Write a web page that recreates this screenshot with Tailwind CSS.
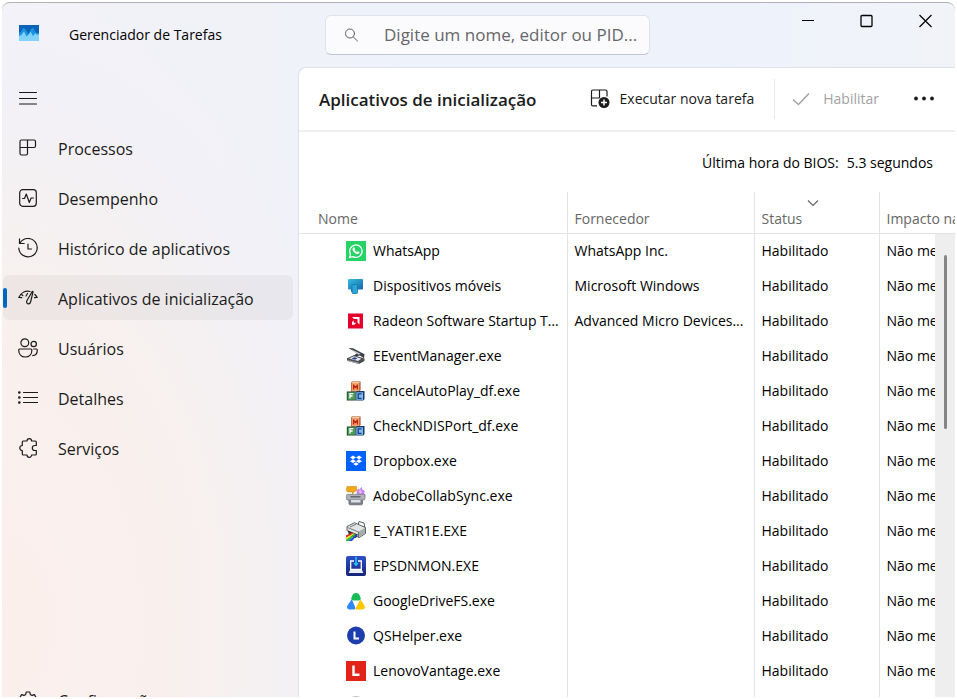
<!DOCTYPE html>
<html lang="pt-BR">
<head>
  <meta charset="UTF-8" />
  <meta name="viewport" content="width=device-width, initial-scale=1.0"/>
  <title>Gerenciador de Tarefas</title>
  <script src="https://cdn.jsdelivr.net/npm/@tailwindcss/browser@4"></script>
</head>
<body class="bg-white p-0.5 h-screen overflow-hidden font-['Open_Sans','Noto_Sans',sans-serif] text-[#1b1b1b]">

  <!-- Ícones dos aplicativos -->
  <svg class="size-0" aria-hidden="true">
    <defs>
      <linearGradient id="gTela" x1="0" y1="0" x2="1" y2="1"><stop offset="0" stop-color="#35bfdc"/><stop offset="1" stop-color="#1565b0"/></linearGradient>
      <linearGradient id="gEpson" x1="0" y1="0" x2="0" y2="1"><stop offset="0" stop-color="#2b50c8"/><stop offset="1" stop-color="#16237c"/></linearGradient>
    </defs>
    <symbol id="whatsapp" viewBox="0 0 20 20">
      <path fill="#25d366" d="M0 0h20v20H0z"/>
      <path fill="none" stroke="#fff" stroke-width="1.3" d="M3.6 16.4l.9-3.2a6.2 6.2 0 1 1 2.4 2.4z"/>
      <path fill="#fff" d="M7.4 6.6c.6-.5 1-.3 1.2.2l.5 1.1c.1.4-.5.8-.5 1.1.5 1 1.3 1.7 2.3 2.1.4 0 .8-.9 1.2-.7l1.3.7c.3.2.1 1-.4 1.4-.8.7-2 .6-3.4-.1-1.5-.8-2.9-2.4-3.1-3.7-.1-.9.3-1.6.9-2.1z"/>
    </symbol>
    <symbol id="dispositivos" viewBox="0 0 20 20">
      <rect x="2" y="3" width="15" height="10.5" rx="1" fill="url(#gTela)"/>
      <path fill="#0e4d86" d="M5 13.5h3v2H5z"/>
      <rect x="6" y="8.5" width="5.5" height="9" rx=".8" fill="#2aa6d6" stroke="#1873ae" stroke-width=".8"/>
    </symbol>
    <symbol id="radeon" viewBox="0 0 20 20">
      <path fill="#e4002b" d="M2 2.500h15v15H2z"/>
      <path fill="#fff" d="M6 6h7.500v7.500l-2-2V8H8zM7.700 9.300v2.500h2.500L8.300 13.700H6v-2.600z"/>
    </symbol>
    <symbol id="eevent" viewBox="0 0 20 20">
      <path fill="#3b3f46" d="M2.500 2l4.500.3 11.500 6-.5 4-4-2.800L9 10.500l-2-.5 4-2.700z"/>
      <path fill="#c3c8cf" d="M5.500 3.200l9 4.600-1.700.9-5-3.300z"/>
      <path fill="#4a4e55" d="M1 12.300l7-3 10.500 3.200v2.500L13 18 1 14.700z"/>
      <path fill="#e6e9ee" d="M3 12.500l5-2.300 7.300 2.600-3.300 2.300z"/>
      <path fill="#27408f" d="M5.500 12.500l3-1.300 2.800 1-2.300 1.500z"/>
      <path fill="#a5aab2" d="M1.500 14L13 16.800V18L1.500 15z"/>
    </symbol>
    <symbol id="mfc" viewBox="0 0 20 20">
      <path fill="#8f3d14" d="M5 2l1-1.500h8.500V9L13.500 10.500H5z"/>
      <path fill="#f4a26c" d="M5.500 2h8v8h-8z"/>
      <path fill="#f9c69f" d="M5.500 2L6.500.8h7.500L13.500 2z"/>
      <path fill="#153c19" d="M.8 10.500h8.900v9H.8z"/>
      <path fill="#4d9b59" d="M1.600 11.300h7.400v7.500H1.600z"/>
      <path fill="#12386c" d="M9.900 11l.8-.9h7.800v8l-1.200 1.400H9.900z"/>
      <path fill="#83b8ec" d="M10.300 11.300H17v7.500h-6.700z"/>
      <path fill="none" stroke="#bd1f14" stroke-width="1.300" d="M7.600 8.500v-5M11.400 8.500v-5M7.600 4.500l1.900 2 1.900-2"/>
      <path fill="none" stroke="#fff" stroke-width="1.300" d="M4 17.600v-5h3.300M4 15h2.600"/>
      <path fill="none" stroke="#143f8f" stroke-width="1.300" d="M15.500 12.800h-3.300v4.500h3.300"/>
    </symbol>
    <symbol id="dropbox" viewBox="0 0 20 20">
      <path fill="#0061fe" d="M0 0h20v20H0z"/>
      <path fill="#fff" d="M7 4.500l3 1.900-3 1.900-3-1.900zM13 4.500l3 1.900-3 1.900-3-1.900zM7 8.300l3 1.900-3 1.900-3-1.900zM13 8.300l3 1.900-3 1.900-3-1.900zM10 11.200l2.800 1.800-2.800 1.800L7.200 13z"/>
    </symbol>
    <symbol id="adobe" viewBox="0 0 20 20">
      <path fill="#c783e8" d="M10.500 6L12 2.500l1.700 1L15.500.8l1 3L19 5l-1 2 2 2.500h-9z"/>
      <path fill="#e6bdf5" d="M12.500 5l2.200-1.300L16 6.500l-2 1.600z"/>
      <path fill="#efaa16" stroke="#bd7e10" stroke-width=".5" d="M1 .5h9.500v4.300L7.800 5.900 6.500 8V6H1.500L.3 4.500z"/>
      <rect x=".5" y="8.300" width="18.500" height="5.700" rx="1.300" fill="#aeb1b7" stroke="#74777d" stroke-width=".7"/>
      <path fill="#65686e" d="M4.500 10h10v1.500h-10z"/>
      <path fill="#7b7e84" d="M2.500 14h14.500v3.500l-1 1.800H3.500l-1-1.800z"/>
      <path fill="#dfe0e3" d="M5 14h9.500v2.500H5z"/>
    </symbol>
    <symbol id="yatir" viewBox="0 0 20 20">
      <path fill="#fff" stroke="#44484b" stroke-width=".9" d="M12 4.500l1-4 5 1.500.8 4.500z"/>
      <path fill="#e2e5e5" stroke="#3c4043" stroke-width=".8" d="M1 5.500l7.500-3.800 11 4.800v6l-6.500 4.200L1 9.500z"/>
      <path fill="#a7acad" d="M12.500 10.500l6.500-3.500v5.200l-6.500 4z"/>
      <path fill="none" stroke="#54595c" stroke-width=".8" d="M4 6l6-2.700M1.500 6.500l11 4.500v5"/>
      <path fill="#2a2d2e" d="M2 9.500l10 4-2 3.500-7-2z"/>
      <path fill="#e12a25" d="M0 14.500l6-3 1.500.7L0 17z"/>
      <path fill="#f7df28" d="M0 16.700l7.500-4.500 1.300.6L0 19z"/>
      <path fill="#2cbc45" d="M0 18.700l8.800-5.900 1.200.7L2.500 20H0z"/>
      <path fill="#2947d8" d="M2.500 20l7.500-6.500 1.200.6L6 20z"/>
    </symbol>
    <symbol id="epson" viewBox="0 0 20 20">
      <rect width="20" height="20" rx="2" fill="url(#gEpson)"/>
      <path fill="none" stroke="#fff" stroke-width="1.3" d="M8 5H4.700v8.500h10.600V5H12"/>
      <path fill="#e9edf8" d="M4 14h12l1.300 3H2.700z"/>
      <path fill="#25c3ef" d="M9.200 1h1.600v6h1.900L10 10.500 7.300 7h1.900z"/>
    </symbol>
    <symbol id="gdrive" viewBox="0 0 20 20">
      <path fill="#3086fd" d="M5.800 8.200L1.300 14.700c-.8 1.600.1 3.500 2 3.800h4.200c1.800 0 2-1.300 1.600-2.500z"/>
      <path fill="#fbc800" d="M14.200 8.200l4.500 6.500c.8 1.600-.1 3.500-2 3.800H9l2.500-4.800z"/>
      <path fill="#16bc53" d="M10 2c2 0 2.800.8 3.500 2.200l1.200 2.800c.4 1.500-.8 2.500-2.300 2.500H7.600c-1.500 0-2.700-1-2.300-2.500l1.200-2.800C7.200 2.800 8 2 10 2z"/>
      <path fill="#fff" d="M7.500 10.300h5L10 14.500z"/>
    </symbol>
    <symbol id="qshelper" viewBox="0 0 20 20">
      <circle cx="10" cy="9.500" r="9" fill="#1d3fae"/>
      <path fill="none" stroke="#fff" stroke-width="2" d="M8.500 5.500v7h4.500"/>
    </symbol>
    <symbol id="lenovo" viewBox="0 0 20 20">
      <path fill="#e2231a" d="M0 0h20v20H0z"/>
      <path fill="none" stroke="#fff" stroke-width="2.4" d="M7.500 4.500v9.300h6"/>
    </symbol>
    <symbol id="generico" viewBox="0 0 20 20">
      <circle cx="10" cy="10" r="9.5" fill="#e3e3e3" stroke="#bdbdbd"/>
    </symbol>
  </svg>

  <div class="h-full flex flex-col overflow-hidden rounded-t-lg border-t border-[#b3b3b7] bg-[radial-gradient(ellipse_370px_600px_at_0px_620px,#fbefeb_0%,#f9f0ed_45%,#f4f1f3_75%,#f2f1f7_90%,transparent_110%),linear-gradient(90deg,#f2f2f7_0%,#f0f2f8_28%,#eef2fb_42%,#eef2fb_75%,#f1f3f8_100%)]">

    <!-- Barra de título -->
    <header class="h-16 shrink-0 flex items-center">
      <div class="w-[323px] shrink-0 flex items-center pl-[17px]">
        <svg class="w-5 h-4 mb-1" viewBox="0 0 20 16">
          <path fill="#0a64b8" d="M0 0h20v16H0z"/>
          <path fill="#1c94e2" d="M0 8l2-1 2-4 2.500 1 2 4 1.500 1 2-5 2-1.500 2.500 5L20 8v8H0z"/>
          <path fill="#7fd3fb" d="M0 11l2.500-1L5 6.500l2.500 5L10 9l1.500-2.500L14 11l2.500-3 1.500 2 2-1v7H0z"/>
        </svg>
        <h1 class="ml-[30px] text-sm text-black">Gerenciador de Tarefas</h1>
      </div>
      <label class="w-[325px] h-10 flex items-center rounded-md border border-[#dfe2ea] border-b-[#c3c6ce] bg-[#fbfbfe]">
        <svg class="w-4 h-4 ml-[18px] shrink-0" viewBox="0 0 16 16" fill="none" stroke="#5d5d62" stroke-linecap="round">
          <circle cx="6" cy="6.500" r="4.500"/><path d="M9.300 10l4.200 4"/>
        </svg>
        <input type="text" aria-label="Pesquisar" placeholder="Digite um nome, editor ou PID..." class="ml-6 w-full min-w-0 bg-transparent text-[17px] placeholder:text-[#66666a] focus:outline-none">
      </label>
      <div class="ml-auto self-start flex">
        <button type="button" aria-label="Minimizar" class="w-[59px] h-9 grid place-items-center hover:bg-black/5">
          <svg class="w-3.5 h-3.5" viewBox="0 0 14 14" fill="none" stroke="#000"><path d="M1 6.500h12"/></svg>
        </button>
        <button type="button" aria-label="Maximizar" class="w-[59px] h-9 grid place-items-center hover:bg-black/5">
          <svg class="w-3.5 h-3.5" viewBox="0 0 14 14" fill="none" stroke="#000" stroke-width="1.3"><rect x="1" y="1.500" width="11" height="11" rx="1"/></svg>
        </button>
        <button type="button" aria-label="Fechar" class="w-[59px] h-9 grid place-items-center hover:bg-red-600">
          <svg class="w-3.5 h-3.5" viewBox="0 0 14 14" fill="none" stroke="#000" stroke-width="1.2"><path d="M.5 1l12 12M12.500 1L.5 13"/></svg>
        </button>
      </div>
    </header>

    <div class="flex-1 min-h-0 flex">
      <!-- Menu lateral -->
      <nav class="w-[296px] shrink-0 flex flex-col gap-[5px] pl-px pr-[5px] pt-2">
        <button type="button" aria-label="Menu" class="h-[45px] w-12 pl-[15px]">
          <svg class="w-5 h-5" viewBox="0 0 20 20" stroke="#1b1b1b" stroke-width="1.2" stroke-linecap="round"><path d="M1.500 4.500h17M1.500 10.500h17M1.500 16h17"/></svg>
        </button>
        <a href="#" class="h-[45px] flex items-center gap-5 pl-[15px] rounded-md hover:bg-black/5">
          <svg class="w-5 h-5" viewBox="0 0 20 20" fill="none" stroke="#1b1b1b" stroke-width="1.2"><path d="M3.500 2h12.500a1.500 1.500 0 0 1 1.500 1.500V8A1.500 1.500 0 0 1 16 9.500H2V3.500A1.500 1.500 0 0 1 3.500 2zM2 9.500v6A1.500 1.500 0 0 0 3.500 17H8a1.500 1.500 0 0 0 1.500-1.500V2"/></svg>
          <span class="pt-0.5">Processos</span>
        </a>
        <a href="#" class="h-[45px] flex items-center gap-5 pl-[15px] rounded-md hover:bg-black/5">
          <svg class="w-5 h-5" viewBox="0 0 20 20" fill="none" stroke="#1b1b1b" stroke-width="1.2" stroke-linejoin="round" stroke-linecap="round"><rect x="1.700" y="1.700" width="16.600" height="16.600" rx="3"/><path d="M4.500 10.500h2L8.300 6l3 8.500 1.800-4.500h2.400"/></svg>
          <span class="pt-0.5">Desempenho</span>
        </a>
        <a href="#" class="h-[45px] flex items-center gap-5 pl-[15px] rounded-md hover:bg-black/5">
          <svg class="w-5 h-5" viewBox="0 0 20 20" fill="none" stroke="#1b1b1b" stroke-width="1.2" stroke-linecap="round"><path d="M2.200 4.800A9.200 9.200 0 1 1 .8 10M1.500.8v4.700h4.700M10 6v5h3.500"/></svg>
          <span class="pt-0.5">Histórico de aplicativos</span>
        </a>
        <a href="#" aria-current="page" class="relative h-[45px] flex items-center gap-5 pl-[15px] rounded-md bg-black/4">
          <span class="absolute left-0 w-1 h-5 rounded-full bg-[#0067c0]"></span>
          <svg class="w-5 h-5" viewBox="0 0 20 20" fill="none" stroke="#1b1b1b" stroke-width="1.2" stroke-linecap="round" stroke-linejoin="round"><path d="M.8 9.500C3 4.500 7.500 2.300 12 3.500M.8 9.500l3 .2M3.200 6.200l1.600 1.300M16.800 6.500c1 .9 1.800 1.800 2.400 3l-2.700.2M14.200 3.500L9 12.500c-.8 1.600-.2 3 1 3.300 1.300.3 2.300-.6 2.700-2.300l2.300-9.500c.1-.6-.5-.9-.8-.5zM9.500 5.500L8 8"/></svg>
          <span class="pt-0.5">Aplicativos de inicialização</span>
        </a>
        <a href="#" class="h-[45px] flex items-center gap-5 pl-[15px] rounded-md hover:bg-black/5">
          <svg class="w-5 h-5" viewBox="0 0 20 20" fill="none" stroke="#1b1b1b" stroke-width="1.2"><circle cx="6.800" cy="4.800" r="3.900"/><circle cx="15.700" cy="6" r="2.700"/><path d="M1.700 11h11.200c.6 0 1 .4 1 1 0 4-2.500 7-6.600 7S.7 16 .7 12c0-.6.4-1 1-1zM15.300 11h3c.6 0 1 .4 1 1 0 3.700-2 5.600-5 5.600"/></svg>
          <span class="pt-0.5">Usuários</span>
        </a>
        <a href="#" class="h-[45px] flex items-center gap-5 pl-[15px] rounded-md hover:bg-black/5">
          <svg class="w-5 h-5" viewBox="0 0 20 20" fill="#1b1b1b"><circle cx="1.300" cy="4.500" r="1.300"/><circle cx="1.300" cy="9.500" r="1.300"/><circle cx="1.300" cy="14.500" r="1.300"/><path fill="none" stroke="#1b1b1b" stroke-width="1.2" stroke-linecap="round" d="M5.500 4.500h14M5.500 9.500h14M5.500 14.500h14"/></svg>
          <span class="pt-0.5">Detalhes</span>
        </a>
        <a href="#" class="h-[45px] flex items-center gap-5 pl-[15px] rounded-md hover:bg-black/5">
          <svg class="w-5 h-5" viewBox="0 0 20 20" fill="none" stroke="#1b1b1b" stroke-width="1.2" stroke-linejoin="round"><path d="M9 3a2.300 2.300 0 0 1 4.600 0h3.700c.6 0 1 .4 1 1v3.500h-1.500a2.500 2.500 0 0 0 0 5h1.500V16c0 .6-.4 1-1 1h-3.700a2.300 2.300 0 0 1-4.600 0H5.300c-.6 0-1-.4-1-1v-3.500a2.500 2.500 0 0 1 0-5V4c0-.6.4-1 1-1z"/></svg>
          <span class="pt-0.5">Serviços</span>
        </a>
        <a href="#" class="mt-auto -mb-[26px] shrink-0 h-[45px] flex items-center gap-5 pl-[15px] rounded-md hover:bg-black/5">
          <svg class="w-5 h-5" viewBox="0 0 20 20" fill="none" stroke="#1b1b1b" stroke-width="1.2" stroke-linejoin="round"><path d="M8.200 1h3.600l.5 2.400 1.700 1 2.400-.8 1.800 3.100-1.900 1.700v2l1.900 1.700-1.800 3.100-2.400-.8-1.700 1-.5 2.400H8.200l-.5-2.400-1.700-1-2.400.8-1.800-3.100 1.900-1.700v-2L1.800 6.700l1.800-3.100 2.400.8 1.700-1z"/><circle cx="10" cy="9.500" r="2.800"/></svg>
          <span>Configurações</span>
        </a>
      </nav>

      <!-- Conteúdo -->
      <main class="flex-1 min-w-0 flex flex-col overflow-hidden bg-white rounded-tl-lg border-t border-l border-[#dfe1e9]">
        <div class="h-16 shrink-0 flex items-center pl-5 pr-[11px] border-b-2 border-[#efefef] text-sm">
          <h2 class="pt-0.5 text-[17px] font-semibold whitespace-nowrap">Aplicativos de inicialização</h2>
          <button type="button" class="ml-auto h-10 flex items-center gap-2.5 whitespace-nowrap">
            <svg class="w-5 h-5" viewBox="0 0 20 20" fill="none" stroke="#1b1b1b" stroke-width="1.2"><path d="M7 16.900H3a1.500 1.500 0 0 1-1.500-1.500V2.500A1.500 1.500 0 0 1 3 1h12.500A1.500 1.500 0 0 1 17 2.500v5M1.500 9h8M9.500 1v8"/><circle cx="14" cy="13.500" r="5.500" fill="#1b1b1b" stroke="none"/><path stroke="#fff" stroke-width="1.5" d="M14 10.500v6M11 13.500h6"/></svg>
            Executar nova tarefa
          </button>
          <div class="ml-5 h-10 border-l border-[#ebebeb]"></div>
          <button type="button" disabled class="ml-4 h-10 flex items-center gap-3 text-[#a2a2a2]">
            <svg class="w-5 h-5" viewBox="0 0 20 20" fill="none" stroke="#a2a2a2" stroke-width="1.5"><path d="M2 10.500l5.500 5L18 4.500"/></svg>
            Habilitar
          </button>
          <button type="button" aria-label="Mais opções" class="ml-[25px] w-10 h-10 grid place-items-center">
            <svg class="w-5 h-5" viewBox="0 0 20 20" fill="#1b1b1b"><circle cx="2" cy="9.500" r="1.900"/><circle cx="10" cy="9.500" r="1.900"/><circle cx="18" cy="9.500" r="1.900"/></svg>
          </button>
        </div>

        <p class="h-[60px] shrink-0 flex items-center justify-end gap-2 pt-0.5 pr-[22px] text-sm text-black"><span>Última hora do BIOS:</span><span>5.3 segundos</span></p>

        <div class="relative flex-1 min-h-0 overflow-hidden">
          <table class="w-full table-fixed text-sm text-black text-left">
            <colgroup>
              <col class="w-[268px]"><col class="w-[187px]"><col class="w-[125px]"><col>
            </colgroup>
            <thead class="text-[#666666]">
              <tr class="h-[41px] border-b border-[#e3e3e3] align-bottom">
                <th class="font-normal pl-[19px] pb-1 border-r border-[#e3e3e3]">Nome</th>
                <th class="font-normal pl-[7px] pb-1 border-r border-[#e3e3e3]">Fornecedor</th>
                <th class="font-normal pl-[7px] pb-1 border-r border-[#e3e3e3]">
                  <svg class="w-3 h-2 ml-[45px] mb-0.5" viewBox="0 0 12 8" fill="none" stroke="#666" stroke-width="1.2"><path d="M1 1.500l5 5 5-5"/></svg>
                  Status
                </th>
                <th class="font-normal pl-[7px] pb-1 whitespace-nowrap overflow-hidden">Impacto na inicialização</th>
              </tr>
            </thead>
            <tbody id="lista"></tbody>
          </table>
          <!-- Barra de rolagem -->
          <div class="absolute right-0 top-[42px] bottom-0 w-5 bg-[#eeeeee] pt-[21px]">
            <div class="mx-auto w-[3px] h-[174px] rounded-full bg-[#858585]"></div>
          </div>
        </div>
      </main>
    </div>
  </div>

  <script>
    const apps = [
      ['whatsapp', 'WhatsApp', 'WhatsApp Inc.'],
      ['dispositivos', 'Dispositivos móveis', 'Microsoft Windows'],
      ['radeon', 'Radeon Software Startup Task', 'Advanced Micro Devices...'],
      ['eevent', 'EEventManager.exe', ''],
      ['mfc', 'CancelAutoPlay_df.exe', ''],
      ['mfc', 'CheckNDISPort_df.exe', ''],
      ['dropbox', 'Dropbox.exe', ''],
      ['adobe', 'AdobeCollabSync.exe', ''],
      ['yatir', 'E_YATIR1E.EXE', ''],
      ['epson', 'EPSDNMON.EXE', ''],
      ['gdrive', 'GoogleDriveFS.exe', ''],
      ['qshelper', 'QSHelper.exe', ''],
      ['lenovo', 'LenovoVantage.exe', ''],
      ['generico', 'msedge.exe', '']
    ];

    document.getElementById('lista').innerHTML = apps.map(([icone, nome, fornecedor]) => `
      <tr class="h-[35px] hover:bg-black/5">
        <td class="pl-[47px] pr-1 border-r border-[#e3e3e3]">
          <div class="flex items-center gap-[7px]">
            <svg class="w-5 h-5 shrink-0"><use href="#${icone}"/></svg>
            <span class="truncate">${nome}</span>
          </div>
        </td>
        <td class="pl-[7px] pr-1 truncate border-r border-[#e3e3e3]">${fornecedor}</td>
        <td class="pl-[7px] border-r border-[#e3e3e3]">Habilitado</td>
        <td class="pl-[7px] whitespace-nowrap overflow-hidden">Não medido</td>
      </tr>`).join('');
  </script>
</body>
</html>
